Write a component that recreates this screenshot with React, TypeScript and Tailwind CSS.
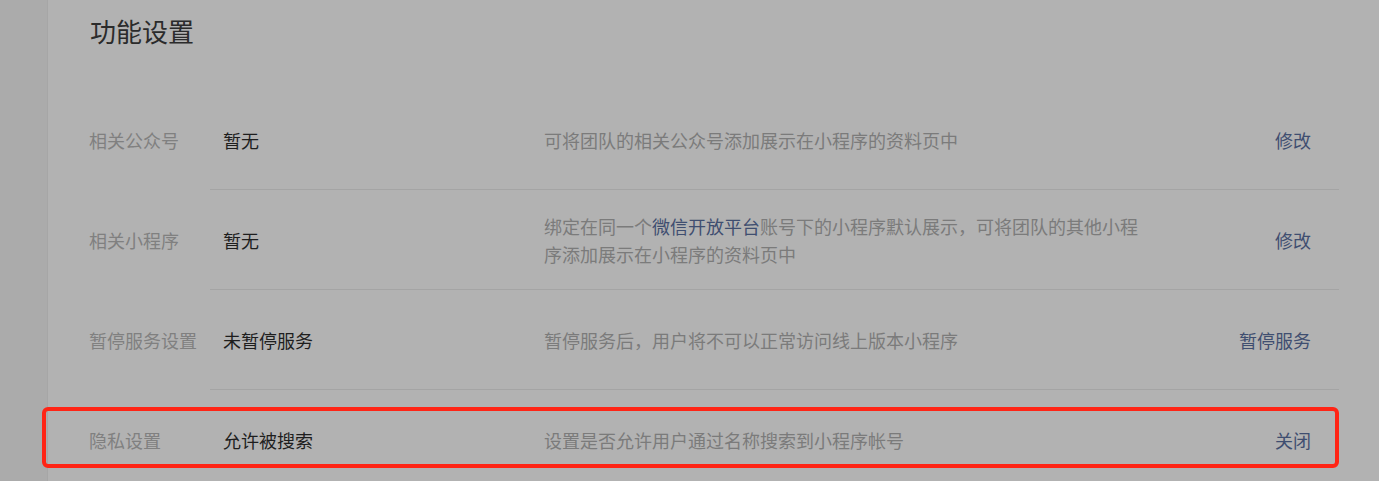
import React from 'react';

type Row = {
  label: string;
  value: string;
  desc: React.ReactNode;
  action: string;
  highlight?: boolean;
};

const ROWS: Row[] = [
  {
    label: '相关公众号',
    value: '暂无',
    desc: '可将团队的相关公众号添加展示在小程序的资料页中',
    action: '修改',
  },
  {
    label: '相关小程序',
    value: '暂无',
    desc: (
      <>
        绑定在同一个<span className="text-[#3f4e70]">微信开放平台</span>账号下的小程序默认展示，可将团队的其他小程序添加展示在小程序的资料页中
      </>
    ),
    action: '修改',
  },
  {
    label: '暂停服务设置',
    value: '未暂停服务',
    desc: '暂停服务后，用户将不可以正常访问线上版本小程序',
    action: '暂停服务',
  },
  {
    label: '隐私设置',
    value: '允许被搜索',
    desc: '设置是否允许用户通过名称搜索到小程序帐号',
    action: '关闭',
    highlight: true,
  },
];

export default function App() {
  return (
    <div
      className="w-[1379px] h-[481px] overflow-hidden flex bg-[#b2b2b2]"
      style={{ fontFamily: '"Noto Sans CJK SC", "Noto Sans", sans-serif' }}
    >
      {/* left sidebar strip */}
      <div className="w-[48px] shrink-0 bg-[#ababab] border-r border-[#a6a6a6]" />

      {/* settings panel */}
      <div className="flex-1 pl-[41px] pt-[13px]">
        <h2 className="text-[26px] leading-[36px] text-[#2b2b2b] pl-[1px]">功能设置</h2>

        <div className="mt-[41px] w-[1250px]">
          {ROWS.map((row, idx) => (
            <div key={idx} className="relative flex h-[100px] text-[18px] leading-[28px]">
              {row.highlight && (
                <div className="absolute left-[-47px] right-[0px] top-[17px] h-[61px] border-[4px] border-[#ff2415] rounded-[6px] pointer-events-none" />
              )}
              <div className="w-[121px] shrink-0 flex items-center text-[#808080]">{row.label}</div>
              <div
                className={
                  'flex-1 flex items-center pl-[13px] pr-[28px] ' +
                  (row.highlight ? '' : 'border-b border-[#a4a4a4]')
                }
              >
                <div className="w-[321px] shrink-0 text-[#1e1e1e]">{row.value}</div>
                <div className="w-[600px] shrink-0 text-[#7b7b7b]">{row.desc}</div>
                <div className="ml-auto text-[#3f4e70]">{row.action}</div>
              </div>
            </div>
          ))}
        </div>
      </div>
    </div>
  );
}
